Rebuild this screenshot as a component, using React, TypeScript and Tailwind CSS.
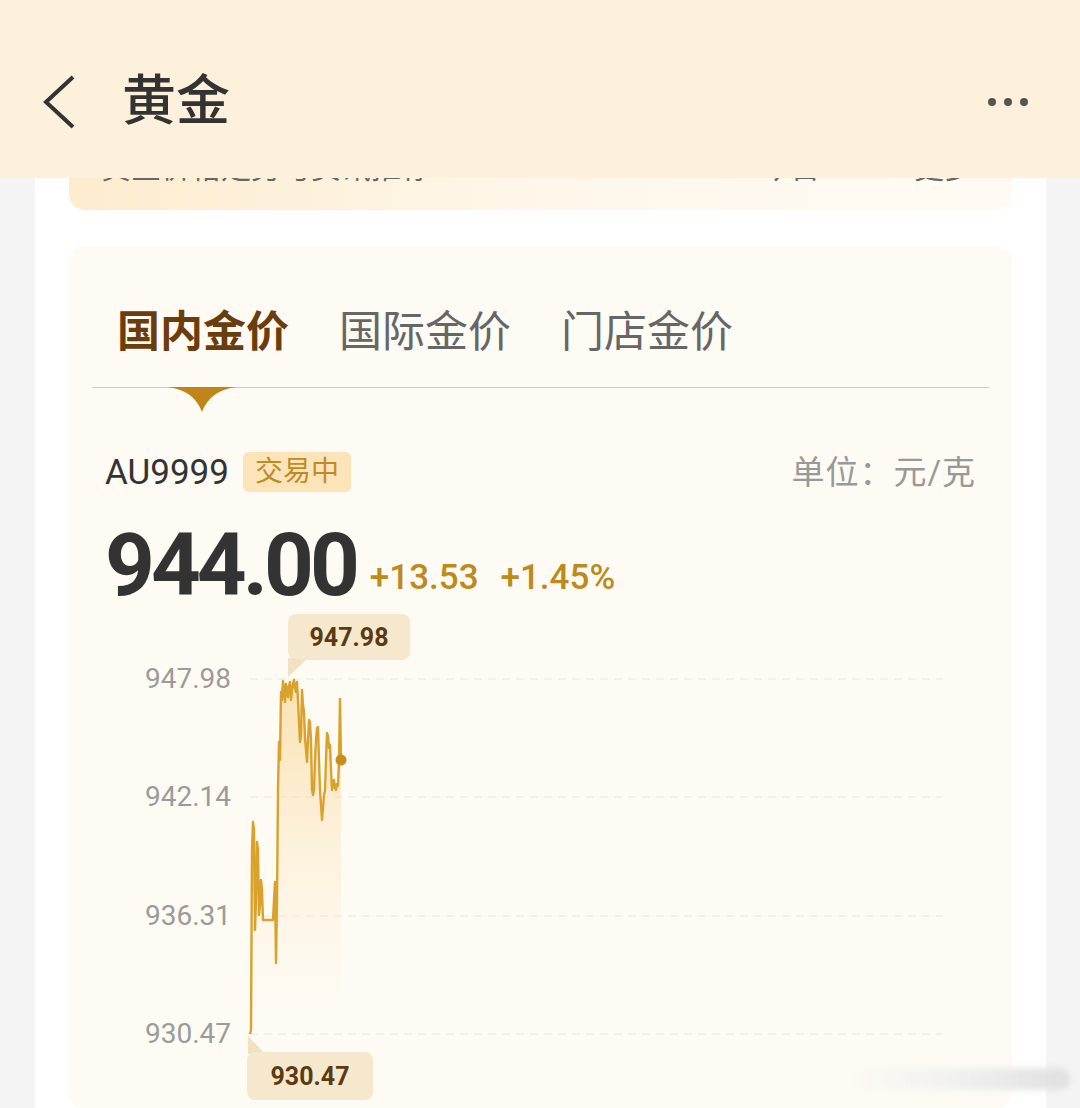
import React from 'react';

const font = { fontFamily: 'Roboto, "Noto Sans CJK SC", sans-serif' };

// price line, in page pixels (chart svg uses a page-aligned viewBox)
const line: [number, number][] = [
  [250, 1034], [251, 1030], [252, 850], [253, 822], [254, 830], [255, 930], [256, 900],
  [257, 842], [258, 850], [259, 915], [260, 905], [261, 880], [262, 890], [263, 920],
  [268, 920], [273, 920], [274, 900], [275, 882], [276, 963], [277, 900], [278, 790],
  [279, 742], [280, 760], [281, 692], [282, 700], [283, 681], [284, 690], [285, 702],
  [286, 684], [287, 690], [288, 697], [289, 686], [290, 682], [291, 700], [292, 690],
  [293, 684], [294, 680], [295, 688], [296, 692], [297, 682], [298, 700], [299, 722],
  [300, 742], [301, 735], [302, 690], [303, 705], [304, 712], [305, 738], [306, 750],
  [307, 762], [308, 740], [309, 720], [310, 722], [311, 740], [312, 790], [313, 795],
  [314, 790], [315, 760], [316, 740], [317, 728], [318, 727], [319, 760], [320, 790],
  [321, 805], [322, 820], [323, 808], [324, 795], [325, 790], [326, 760], [327, 733],
  [328, 736], [329, 748], [330, 745], [331, 770], [332, 790], [333, 784], [334, 780],
  [335, 788], [336, 790], [337, 784], [338, 786], [339, 760], [340, 699], [341, 760],
];

const linePath = line.map(([x, y], i) => `${i === 0 ? 'M' : 'L'}${x} ${y}`).join(' ');
const areaPath = `${linePath} L341 1034 L250 1034 Z`;

const grid = [
  { y: 679, label: '947.98' },
  { y: 797, label: '942.14' },
  { y: 916, label: '936.31' },
  { y: 1034, label: '930.47' },
];

function PriceChart() {
  return (
    <svg className="block w-full h-[500px]" viewBox="69 609 943 500">
      <defs>
        <linearGradient id="fillGold" x1="0" y1="680" x2="0" y2="1010" gradientUnits="userSpaceOnUse">
          <stop offset="0" stopColor="#f8cf85" stopOpacity="0.6" />
          <stop offset="1" stopColor="#fbe6bd" stopOpacity="0" />
        </linearGradient>
      </defs>
      {grid.map(g => (
        <g key={g.label}>
          <line x1="250" x2="943" y1={g.y} y2={g.y} stroke="#ebe5da" strokeWidth="1.2" strokeDasharray="8 6" />
          <text x="231" y={g.y + 9} textAnchor="end" fontSize="28" fill="#9b9b9b" style={font}>
            {g.label}
          </text>
        </g>
      ))}
      <path d={areaPath} fill="url(#fillGold)" />
      <path d={linePath} fill="none" stroke="#d9a22c" strokeWidth="2.4" strokeLinejoin="round" />
      <circle cx="341" cy="760" r="5.5" fill="#c98f1c" />

      {/* high tooltip */}
      <rect x="288" y="614" width="122" height="46" rx="8" fill="#f6e8cc" />
      <path d="M288 658 L306 660 L288 677 Z" fill="#f1e1c1" />
      <text x="349" y="646" textAnchor="middle" fontSize="25" fontWeight="700" fill="#5b3a13" style={font}>
        947.98
      </text>

      {/* low tooltip */}
      <path d="M248 1036 L248 1054 L265 1054 Z" fill="#f1e1c1" />
      <rect x="247" y="1052" width="126" height="48" rx="8" fill="#f6e8cc" />
      <text x="310" y="1085" textAnchor="middle" fontSize="25" fontWeight="700" fill="#5b3a13" style={font}>
        930.47
      </text>
    </svg>
  );
}

export default function App() {
  return (
    <div className="relative min-h-[1108px] bg-[#f4f4f4] overflow-hidden" style={font}>
      {/* header */}
      <div className="h-[178px] bg-[#fef1db]">
        <div className="h-[50px]" />
        <div className="h-[104px] flex items-center pl-[42px] pr-[52px]">
          <svg width="34" height="56" viewBox="0 0 34 56" className="shrink-0">
            <polyline points="31,3 4,28 31,53" fill="none" stroke="#333" strokeWidth="4" />
          </svg>
          <h1 className="ml-[46px] text-[54px] leading-none font-medium text-[#333]">黄金</h1>
          <div className="ml-auto flex items-center gap-[8px]">
            <span className="w-[8px] h-[8px] rounded-full bg-[#555]" />
            <span className="w-[8px] h-[8px] rounded-full bg-[#555]" />
            <span className="w-[8px] h-[8px] rounded-full bg-[#555]" />
          </div>
        </div>
      </div>

      {/* column */}
      <div className="ml-[35px] mr-[34px] bg-white min-h-[930px] px-[34px]">
        {/* card scrolled under header */}
        <div className="h-[32px] overflow-hidden rounded-b-[16px] bg-gradient-to-r from-[#fdecce] via-[#fef7ea] to-[#fffbf4]">
          <div className="-mt-[25px] flex justify-between pl-[32px] pr-[38px] text-[30px] leading-[30px] text-[#666]">
            <span>黄金价格走势与资讯推荐</span>
            <span>今日 1.0% · 更多</span>
          </div>
        </div>

        {/* price card */}
        <div className="mt-[36px] rounded-[16px] bg-[#fefbf4]">
          <div className="px-[23px]">
            <div className="relative flex gap-[50px] pl-[25px] pt-[58px] pb-[26px] border-b border-[#e6cb97]">
              <span className="text-[43px] leading-[57px] font-bold text-[#6b3d0c]">国内金价</span>
              <span className="text-[43px] leading-[57px] text-[#666]">国际金价</span>
              <span className="text-[43px] leading-[57px] text-[#666]">门店金价</span>
              <svg className="absolute left-[75px] top-full" width="70" height="25" viewBox="0 0 70 25">
                <path d="M0 0 H70 Q43 3 35 25 Q27 3 0 0 Z" fill="#bf8516" />
              </svg>
            </div>
          </div>

          <div className="mt-[64px] px-[36px] flex items-center justify-between">
            <div className="flex items-center gap-[14px]">
              <span className="text-[35px] leading-none text-[#333]">AU9999</span>
              <span className="h-[40px] px-[12px] rounded-[6px] bg-[#fbe4b8] text-[28px] leading-[40px] text-[#c28a24]">
                交易中
              </span>
            </div>
            <span className="text-[33px] leading-none tracking-[1px] text-[#999]">单位：元/克</span>
          </div>

          <div className="mt-[30px] px-[36px] flex items-end">
            <span className="text-[87px] leading-none font-bold tracking-[-4px] text-[#333]">944.00</span>
            <span className="ml-[14px] mb-[14px] text-[35px] leading-none font-medium text-[#bd8a1c]">+13.53</span>
            <span className="ml-[22px] mb-[14px] text-[35px] leading-none font-medium text-[#bd8a1c]">+1.45%</span>
          </div>

          <PriceChart />
        </div>
      </div>

      {/* faint watermark, bottom right */}
      <div className="absolute left-[850px] top-[1068px] w-[220px] h-[22px] rounded-full bg-gradient-to-r from-transparent via-[#f0f0f0] to-[#e0e0e0] blur-[3px]" />
    </div>
  );
}
